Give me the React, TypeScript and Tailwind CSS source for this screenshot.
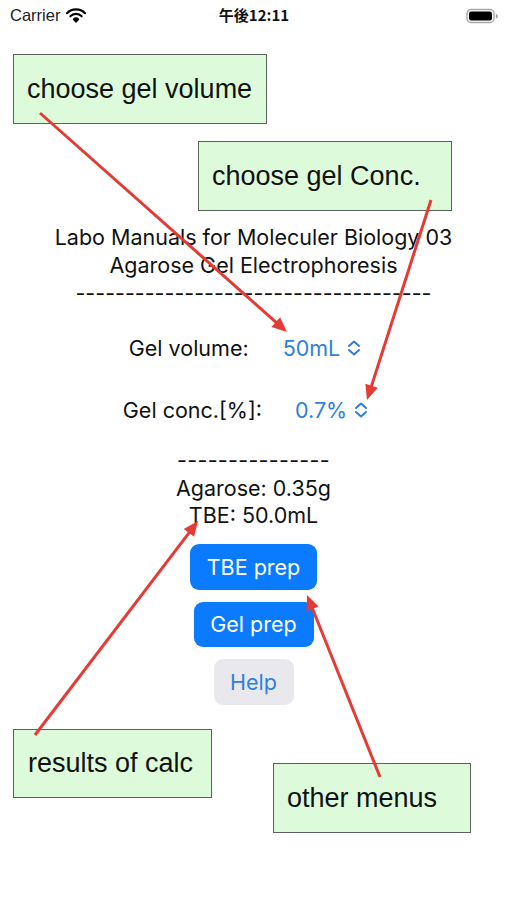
import React from "react";

const sans = { fontFamily: '"Inter", "Noto Sans CJK JP", sans-serif' };

function Wifi() {
  return (
    <svg width="20" height="15" viewBox="0 0 20 15" className="ml-[6px]">
      <path d="M1 5.2 A12.5 12.5 0 0 1 19 5.2" stroke="#000" strokeWidth="2.2" fill="none" strokeLinecap="round" />
      <path d="M4.3 8.3 A8 8 0 0 1 15.7 8.3" stroke="#000" strokeWidth="2.2" fill="none" strokeLinecap="round" />
      <path d="M7.5 11.2 A3.6 3.6 0 0 1 12.5 11.2 L10 14 Z" fill="#000" stroke="#000" strokeWidth="1.4" strokeLinejoin="round" />
    </svg>
  );
}

function Battery() {
  return (
    <svg width="32" height="16" viewBox="0 0 32 16">
      <rect x="1" y="1.5" width="27" height="13" rx="4" fill="none" stroke="#a8a8a8" strokeWidth="1.4" />
      <rect x="3" y="3.5" width="23" height="9" rx="2.2" fill="#000" />
      <path d="M29.8 6 A2.2 2.2 0 0 1 29.8 10.5 Z" fill="#a8a8a8" />
    </svg>
  );
}

function UpDown() {
  return (
    <svg width="16" height="18" viewBox="0 0 16 18" className="ml-[6px]">
      <path d="M3 7 L8 2.5 L13 7" stroke="#2f7fe0" strokeWidth="2" fill="none" strokeLinecap="round" strokeLinejoin="round" />
      <path d="M3 11 L8 15.5 L13 11" stroke="#2f7fe0" strokeWidth="2" fill="none" strokeLinecap="round" strokeLinejoin="round" />
    </svg>
  );
}

function Note({ text, className }: { text: string; className: string }) {
  return (
    <div
      className={"absolute bg-[#ddfadb] border-[1.5px] border-[#5b615b] flex items-center text-[27px] text-[#111] " + className}
      style={{ fontFamily: '"Liberation Sans", Arial, sans-serif' }}
    >
      {text}
    </div>
  );
}

function Arrow({ x1, y1, x2, y2 }: { x1: number; y1: number; x2: number; y2: number }) {
  const dx = x2 - x1;
  const dy = y2 - y1;
  const len = Math.hypot(dx, dy);
  const ux = dx / len;
  const uy = dy / len;
  const hl = 15;
  const hw = 6.5;
  const bx = x2 - ux * hl;
  const by = y2 - uy * hl;
  const p1 = `${bx - uy * hw},${by + ux * hw}`;
  const p2 = `${bx + uy * hw},${by - ux * hw}`;
  return (
    <g>
      <line x1={x1} y1={y1} x2={bx + ux * 2} y2={by + uy * 2} stroke="#e53b35" strokeWidth="3" />
      <polygon points={`${x2},${y2} ${p1} ${p2}`} fill="#e53b35" />
    </g>
  );
}

export default function App() {
  return (
    <div className="relative w-[507px] h-[900px] bg-white overflow-hidden text-[#111]" style={sans}>
      {/* status bar */}
      <div className="h-[30px] flex items-center justify-between pl-[10px] pr-[9px] pt-[1px]">
        <div className="flex items-center w-[120px]">
          <span className="text-[16.5px] text-[#222]" style={{ fontFamily: '"Liberation Sans", Arial, sans-serif' }}>Carrier</span>
          <Wifi />
        </div>
        <div className="text-[15px] font-semibold" style={{ fontFamily: '"Noto Sans CJK JP", sans-serif' }}>午後12:11</div>
        <div className="w-[120px] flex justify-end">
          <Battery />
        </div>
      </div>

      {/* main */}
      <div className="flex flex-col items-center">
        <div className="mt-[193px] flex flex-col items-center text-[21.5px] leading-[28px] text-[#111]">
          <div>Labo Manuals for Moleculer Biology 03</div>
          <div>Agarose Gel Electrophoresis</div>
          <div>------------------------------------</div>
        </div>

        <div className="mt-[27px] flex items-center mr-[16px] text-[21.5px] leading-[28px]">
          <span>Gel volume:</span>
          <span className="ml-[34px] text-[#2f7fe0]">50mL</span>
          <UpDown />
        </div>

        <div className="mt-[34px] flex items-center mr-[15px] text-[21.5px] leading-[28px]">
          <span>Gel conc.[%]:</span>
          <span className="ml-[33px] text-[#2f7fe0]">0.7%</span>
          <UpDown />
        </div>

        <div className="mt-[22px] flex flex-col items-center text-[21.5px] leading-[28px]">
          <div className="tracking-[0.3px]">---------------</div>
          <div>Agarose: 0.35g</div>
          <div className="-mt-[1px]">TBE: 50.0mL</div>
        </div>

        <div className="mt-[15px] flex flex-col items-center gap-[12px] text-[21.5px]">
          <div className="h-[46px] w-[127px] rounded-[9px] bg-[#0a7bff] text-white flex items-center justify-center">TBE prep</div>
          <div className="h-[45px] w-[120px] rounded-[9px] bg-[#0a7bff] text-white flex items-center justify-center">Gel prep</div>
          <div className="h-[46px] w-[80px] rounded-[9px] bg-[#e9e9ed] text-[#2f7fe0] flex items-center justify-center">Help</div>
        </div>
      </div>

      {/* annotations */}
      <Note text="choose gel volume" className="left-[13px] top-[54px] w-[254px] h-[70px] pl-[13px]" />
      <Note text="choose gel Conc." className="left-[198px] top-[141px] w-[254px] h-[70px] pl-[13px]" />
      <Note text="results of calc" className="left-[13px] top-[729px] w-[199px] h-[69px] pl-[14px]" />
      <Note text="other menus" className="left-[273px] top-[763px] w-[198px] h-[70px] pl-[13px]" />

      <svg className="absolute left-0 top-0 pointer-events-none" width="507" height="900">
        <Arrow x1={40} y1={113} x2={287} y2={332} />
        <Arrow x1={431} y1={200} x2={367} y2={400} />
        <Arrow x1={35} y1={735} x2={198} y2={521} />
        <Arrow x1={380} y1={777} x2={307} y2={595} />
      </svg>
    </div>
  );
}
